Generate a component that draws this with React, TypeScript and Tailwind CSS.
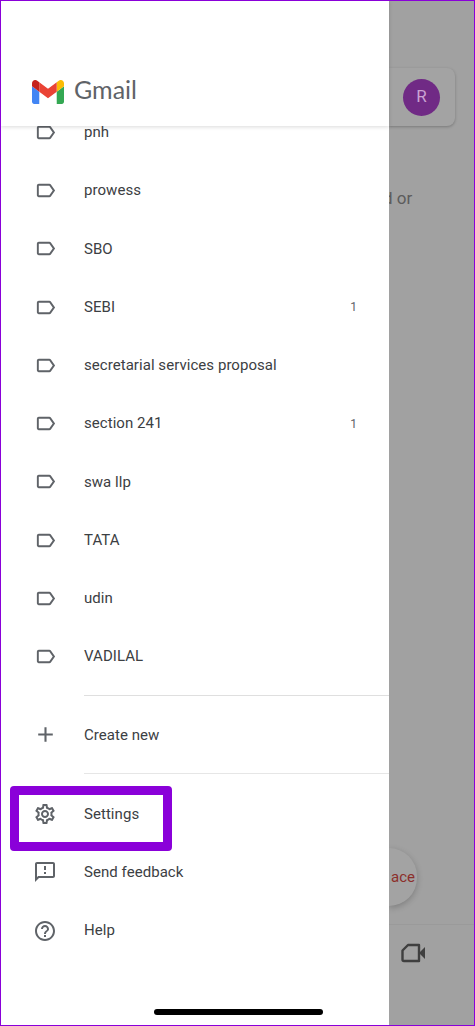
import { ReactNode } from "react";
import { MdAdd, MdHelpOutline, MdOutlineFeedback, MdOutlineSettings } from "react-icons/md";

const labels = [
  { name: "pnh" },
  { name: "prowess" },
  { name: "SBO" },
  { name: "SEBI", count: 1 },
  { name: "secretarial services proposal" },
  { name: "section 241", count: 1 },
  { name: "swa llp" },
  { name: "TATA" },
  { name: "udin" },
  { name: "VADILAL" },
];

function LabelIcon() {
  return (
    <svg viewBox="0 0 24 24" className="h-[23px] w-[23px] fill-[#5f6368]">
      <path d="M17.63 5.84C17.27 5.33 16.67 5 16 5L5 5.01C3.9 5.01 3 5.9 3 7v10c0 1.1.9 1.99 2 1.99L16 19c.67 0 1.27-.33 1.63-.84L22 12l-4.37-6.16zM16 17H5V7h11l3.55 5L16 17z" />
    </svg>
  );
}

function GmailLogo() {
  return (
    <svg viewBox="52 42 88 66" className="h-[24px] w-[32px]">
      <path fill="#4285f4" d="M58 108h14V74L52 59v43c0 3.32 2.69 6 6 6" />
      <path fill="#34a853" d="M120 108h14c3.32 0 6-2.69 6-6V59l-20 15" />
      <path fill="#fbbc04" d="M120 48v26l20-15v-8c0-7.42-8.47-11.65-14.4-7.2" />
      <path fill="#ea4335" d="M72 74V48l24 18 24-18v26L96 92" />
      <path fill="#c5221f" d="M52 51v8l20 15V48l-5.6-4.2c-5.94-4.45-14.4-.22-14.4 7.2" />
    </svg>
  );
}

function Row({ icon, text, count }: { icon: ReactNode; text: string; count?: number }) {
  return (
    <div className="flex h-[58.25px] items-center">
      <div className="flex w-[83px] justify-center pl-[5px]">{icon}</div>
      <span className="flex-1 text-[15px] tracking-[0.05px] text-[#3c4043]">{text}</span>
      {count && <span className="mr-[32px] text-[12px] text-[#5f6368]">{count}</span>}
    </div>
  );
}

export default function App() {
  return (
    <div
      className="relative flex h-[1026px] w-[475px] overflow-hidden border border-[#8a00d9] bg-[#a1a1a1]"
      style={{ fontFamily: "Roboto, sans-serif" }}
    >
      {/* drawer */}
      <div className="relative z-10 flex h-full w-[388px] shrink-0 flex-col bg-white pt-[102.3px]">
        <div className="absolute left-0 right-0 top-0 flex h-[125px] items-end bg-white pb-[22px] pl-[31px] shadow-[0_1px_4px_rgba(0,0,0,0.15)]">
          <GmailLogo />
          <span className="ml-[10px] text-[25px] leading-[30px] text-[#5f6368]" style={{ fontFamily: "Lato, sans-serif" }}>
            Gmail
          </span>
        </div>

        {labels.map((l) => (
          <Row key={l.name} icon={<LabelIcon />} text={l.name} count={l.count} />
        ))}

        <div className="ml-[83px] mt-[9px] h-px bg-[#dfdfdf]" />
        <div className="mt-[10px]">
          <Row icon={<MdAdd className="text-[25px] text-[#5f6368]" />} text="Create new" />
        </div>
        <div className="ml-[83px] mt-[9px] h-px bg-[#e6e6e6]" />
        <div className="mt-[11px]">
          <Row icon={<MdOutlineSettings className="text-[24px] text-[#5f6368]" />} text="Settings" />
          <Row icon={<MdOutlineFeedback className="text-[24px] text-[#5f6368]" />} text="Send feedback" />
          <Row icon={<MdHelpOutline className="text-[24px] text-[#5f6368]" />} text="Help" />
        </div>
      </div>

      {/* dimmed inbox behind the drawer */}
      <div className="relative flex-1">
        <div className="mt-[67px] flex h-[58px] w-[66px] items-center justify-end rounded-r-lg bg-[#a3a3a3] pr-[15px] shadow-[0_1px_3px_rgba(0,0,0,0.25)]">
          <div className="flex h-[37px] w-[37px] items-center justify-center rounded-full bg-[#702a85] text-[17px] text-[#c9a3d3]">
            R
          </div>
        </div>
        <div className="mt-[60px] text-[17px] text-[#5c5c5c] [text-indent:-6px]">d or</div>
        <div className="absolute left-0 top-[847px] flex h-[58px] w-[28px] items-center rounded-r-[29px] bg-[#a3a3a3] pl-[2px] shadow-[0_2px_6px_rgba(0,0,0,0.22)]">
          <span className="whitespace-nowrap text-[15px] text-[#8c2f2b]">ace</span>
        </div>
        <div className="absolute bottom-0 left-0 right-0 flex h-[101px] justify-end border-t border-[#9a9a9a] pr-[47px] pt-[18px]">
          <svg viewBox="0 0 26 20" className="h-[20px] w-[26px] fill-none stroke-[#3f3f3f] stroke-[2.4]">
            <path d="M7 2h11v16H3a1.5 1.5 0 0 1-1.500-1.500V7.500z" strokeLinejoin="round" />
            <path d="M18 10l6-6v12z" fill="#3f3f3f" stroke="none" />
          </svg>
        </div>
      </div>

      {/* highlight around Settings */}
      <div className="absolute left-[9px] top-[785px] z-20 h-[65px] w-[162px] rounded-[4px] border-[9px] border-[#8a00d9]" />

      {/* home indicator */}
      <div className="absolute bottom-[10px] left-[153px] z-20 h-[6px] w-[169px] rounded-full bg-black" />
    </div>
  );
}
